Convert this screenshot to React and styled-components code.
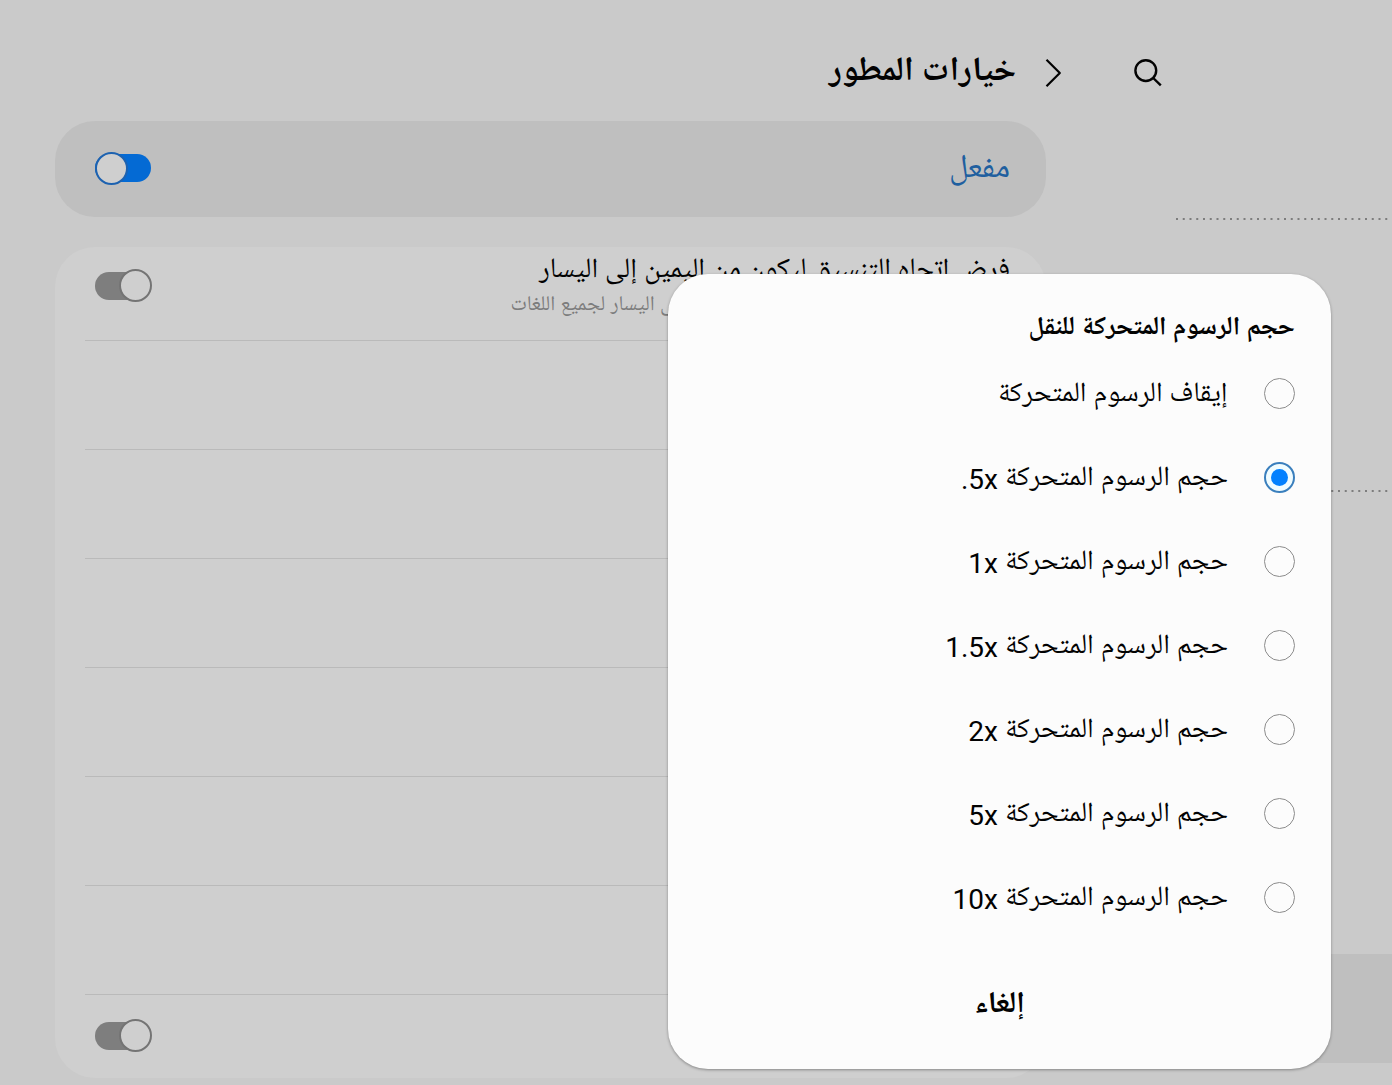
import { useState } from "react";
import styled, { createGlobalStyle } from "styled-components";

const GlobalStyle = createGlobalStyle`
    *,
    *::before,
    *::after {
        box-sizing: border-box;
    }
    body {
        margin: 0;
        background: #cacaca;
        color: #020202;
        font-family: Roboto, "Noto Naskh Arabic UI", "Noto Sans Arabic", "DejaVu Sans", sans-serif;
    }
    button,
    input {
        margin: 0;
        font-family: inherit;
    }
`;

const Page = styled.div`
    position: relative;
    display: flex;
    min-height: 100vh;
    overflow: hidden;
`;

const Sidebar = styled.aside`
    flex: 0 0 276px;
    display: flex;
    flex-direction: column;
`;

const SidebarHeader = styled.div`
    display: flex;
    justify-content: flex-end;
    padding: 58px 0 130px 17px;
`;

const IconButton = styled.button`
    display: flex;
    padding: 0;
    border: 0;
    background: none;
    color: #020202;
    cursor: pointer;
`;

const Dots = styled.svg`
    display: block;
    width: 216px;
    height: 2px;
    margin-bottom: ${({ $gap }) => $gap}px;
`;

const SelectedItem = styled.div`
    height: 109px;
    background: #bfbfbf;
`;

const Main = styled.main`
    flex: 1;
    min-width: 0;
    padding: 0 70px 7px 55px;
`;

const Header = styled.header`
    display: flex;
    align-items: center;
    gap: 20px;
    height: 121px;
    padding-top: 24px;
    margin-right: -20px;
`;

const PageTitle = styled.h1`
    margin: 0;
    font-size: 34px;
    line-height: 40px;
    font-weight: bold;
`;

const MasterCard = styled.label`
    display: flex;
    align-items: center;
    justify-content: space-between;
    height: 96px;
    margin-bottom: 30px;
    padding: 0 36px 2px 40px;
    border-radius: 40px;
    background: #bfbfbf;
    color: #1f5f9f;
    font-size: 33px;
`;

const Panel = styled.div`
    padding: 0 30px 2px;
    border-radius: 40px;
    background: #cfcfcf;
`;

const Row = styled.label`
    display: flex;
    align-items: ${({ $top }) => ($top ? "flex-start" : "center")};
    justify-content: space-between;
    height: ${({ $height }) => $height || 109}px;
    padding: ${({ $top }) => ($top ? "8px" : "0")} 6px 0 10px;
    border-bottom: 1px solid #bababa;

    &:last-child {
        border-bottom: 0;
    }
`;

const RowText = styled.span`
    display: flex;
    flex-direction: column;
    white-space: nowrap;
`;

const RowTitle = styled.span`
    font-size: 28px;
    line-height: 34px;
`;

const RowNote = styled.span`
    color: #7c7c7c;
    font-size: 21px;
    line-height: 34px;
`;

const Switch = styled.input.attrs({ type: "checkbox", role: "switch" })`
    appearance: none;
    display: grid;
    align-items: center;
    flex: none;
    width: 57px;
    height: 33px;
    margin-top: ${({ $drop }) => $drop || 0}px;
    cursor: pointer;

    &::before,
    &::after {
        content: "";
        grid-area: 1 / 1;
    }
    &::before {
        width: 56px;
        height: 28px;
        justify-self: end;
        border-radius: 14px;
        background: #7e7e7e;
    }
    &::after {
        width: 33px;
        height: 33px;
        justify-self: start;
        border: 2px solid #747474;
        border-radius: 50%;
        background: #cfcfcf;
    }
    &:checked::before {
        background: #046ad4;
    }
    &:checked::after {
        justify-self: end;
        border-color: #1d62b0;
    }
`;

const Dialog = styled.form`
    position: absolute;
    right: 61px;
    bottom: 16px;
    width: 663px;
    max-width: calc(100% - 122px);
    display: flex;
    flex-direction: column;
    padding: 37px 36px 43px;
    border-radius: 40px;
    background: #fcfcfc;
    box-shadow: 0 1px 3px rgba(0, 0, 0, 0.35);
`;

const DialogTitle = styled.h2`
    margin: 0 0 4px;
    font-size: 26px;
    line-height: 36px;
    font-weight: bold;
`;

const Option = styled.label`
    display: flex;
    align-items: center;
    gap: 36px;
    height: 84px;
    font-size: 28px;
    cursor: pointer;
`;

const OptionText = styled.span`
    padding-top: 2px;
`;

const Radio = styled.input.attrs({ type: "radio" })`
    appearance: none;
    display: grid;
    place-items: center;
    flex: none;
    width: 31px;
    height: 31px;
    border: 1px solid #8c8c8c;
    border-radius: 50%;

    &:checked {
        border: 2px solid #3a7fbd;
        background: #f0fcff;
    }
    &:checked::before {
        content: "";
        width: 17px;
        height: 17px;
        border-radius: 50%;
        background: #0381fe;
    }
`;

const Cancel = styled.button`
    align-self: center;
    margin-top: 47px;
    padding: 0 40px;
    border: 0;
    background: none;
    color: #020202;
    font-size: 30px;
    line-height: 40px;
    font-weight: bold;
    cursor: pointer;
`;

const scales = [".5x", "1x", "1.5x", "2x", "5x", "10x"];

function DottedLine({ gap }) {
    return (
        <Dots $gap={gap} aria-hidden="true">
            <line x1="0" y1="1" x2="216" y2="1" stroke="#7d7d7d" strokeWidth="2" strokeDasharray="2 4.75" />
        </Dots>
    );
}

function ScaleDialog() {
    const [value, setValue] = useState(".5x");

    return (
        <Dialog role="dialog" aria-labelledby="scale-title">
            <DialogTitle id="scale-title">حجم الرسوم المتحركة للنقل</DialogTitle>
            <Option>
                <Radio name="scale" checked={value === "off"} onChange={() => setValue("off")} />
                <OptionText>إيقاف الرسوم المتحركة</OptionText>
            </Option>
            {scales.map((scale) => (
                <Option key={scale}>
                    <Radio name="scale" checked={value === scale} onChange={() => setValue(scale)} />
                    <OptionText>
                        حجم الرسوم المتحركة <bdi dir="ltr">{scale}</bdi>
                    </OptionText>
                </Option>
            ))}
            <Cancel type="button">إلغاء</Cancel>
        </Dialog>
    );
}

export default function App() {
    return (
        <Page dir="rtl" lang="ar">
            <GlobalStyle />
            <Sidebar>
                <SidebarHeader>
                    <IconButton type="button" aria-label="بحث">
                        <svg width="30" height="30" viewBox="0 0 30 30" fill="none" stroke="currentColor" strokeWidth="2.4">
                            <circle cx="12.8" cy="12.6" r="10.4" />
                            <path d="M20.2 20 L27.8 27.4" />
                        </svg>
                    </IconButton>
                </SidebarHeader>
                <DottedLine gap={270} />
                <DottedLine gap={462} />
                <SelectedItem />
            </Sidebar>
            <Main>
                <Header>
                    <IconButton type="button" aria-label="رجوع">
                        <svg width="30" height="30" viewBox="0 0 30 30" fill="none" stroke="currentColor" strokeWidth="2.2" strokeLinejoin="round">
                            <path d="M10.5 1.8 L23.8 15 L10.5 28.2" />
                        </svg>
                    </IconButton>
                    <PageTitle>خيارات المطور</PageTitle>
                </Header>
                <MasterCard>
                    مفعل
                    <Switch defaultChecked />
                </MasterCard>
                <Panel>
                    <Row $height={94} $top>
                        <RowText>
                            <RowTitle>فرض اتجاه التنسيق ليكون من اليمين إلى اليسار</RowTitle>
                            <RowNote>فرض اتجاه تنسيق الشاشة ليكون من اليمين إلى اليسار لجميع اللغات</RowNote>
                        </RowText>
                        <Switch $drop={14} />
                    </Row>
                    <Row />
                    <Row />
                    <Row />
                    <Row />
                    <Row />
                    <Row />
                    <Row $height={81}>
                        <span />
                        <Switch aria-label="خيار" />
                    </Row>
                </Panel>
            </Main>
            <ScaleDialog />
        </Page>
    );
}
